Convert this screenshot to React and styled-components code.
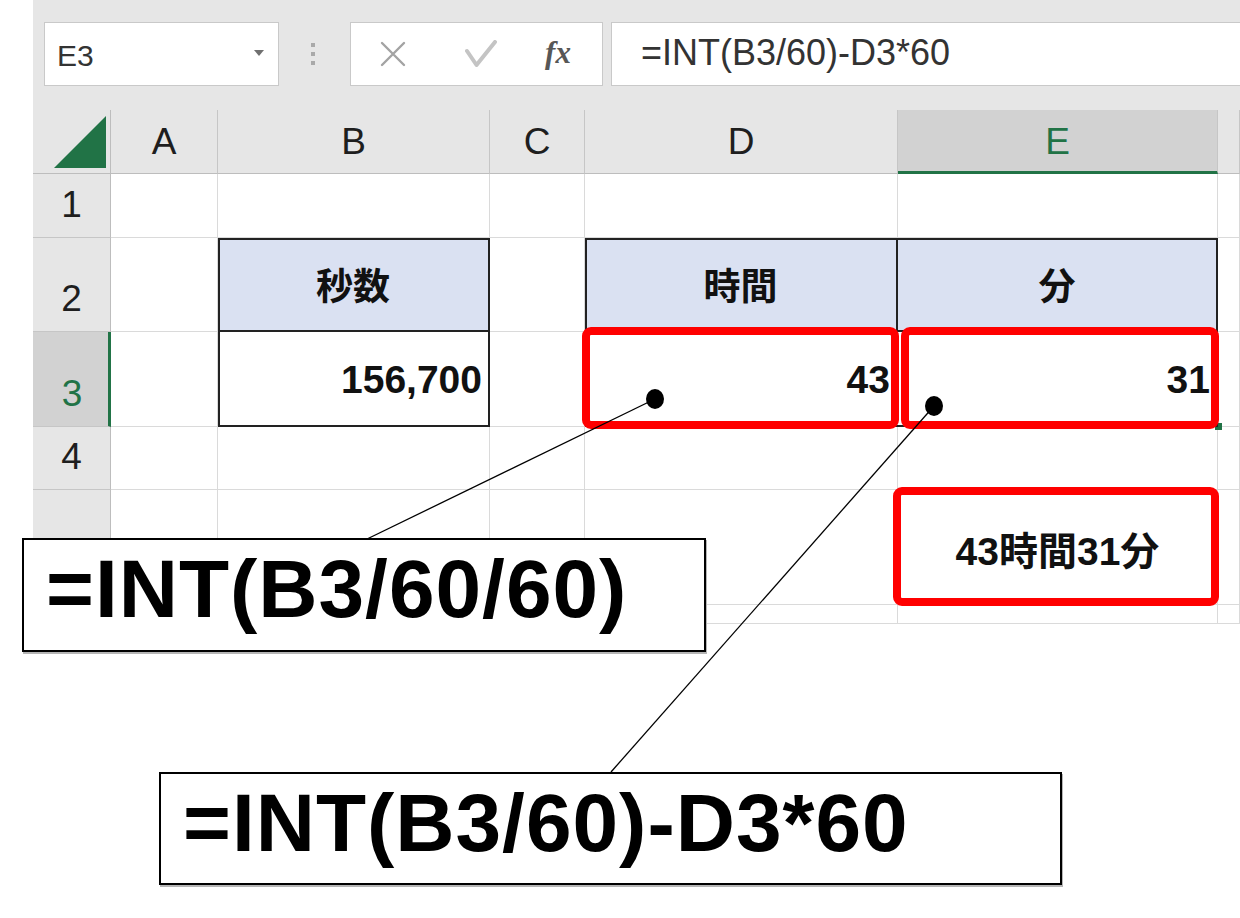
import React from 'react';
import styled, { createGlobalStyle } from 'styled-components';

const GREEN = '#217346';
const FONT = `"Liberation Sans", "Noto Sans CJK JP", sans-serif`;

const GlobalStyle = createGlobalStyle`
  html, body { margin: 0; padding: 0; background: #ffffff; }
  body { font-family: ${FONT}; }
  * { box-sizing: border-box; }
`;

const Canvas = styled.div`
  position: relative;
  width: 1240px;
  height: 918px;
  overflow: hidden;
  background: #ffffff;
`;

const Sheet = styled.div`
  margin-left: 33px;
  width: 1207px;
  background: #e6e6e6;
`;

const Toolbar = styled.div`
  display: flex;
  height: 110px;
  padding: 22px 0 24px 11px;
`;

const NameBox = styled.div`
  width: 235px;
  display: flex;
  align-items: center;
  padding: 4px 14px 0 12px;
  background: #ffffff;
  border: 1px solid #c9c9c9;
  font-family: "Liberation Sans", sans-serif;
  font-size: 30px;
  color: #333333;
`;

const DropArrow = styled.span`
  margin-left: auto;
  margin-bottom: 6px;
  width: 0;
  height: 0;
  border-left: 5.5px solid transparent;
  border-right: 5.5px solid transparent;
  border-top: 6px solid #707070;
`;

const Grip = styled.div`
  align-self: center;
  display: flex;
  flex-direction: column;
  gap: 5px;
  margin: 0 35px 0 32px;
`;

const GripDot = styled.span`
  width: 4px;
  height: 4px;
  background: #a9a9a9;
`;

const ButtonGroup = styled.div`
  width: 253px;
  display: grid;
  grid-template-columns: repeat(3, 84px);
  align-items: center;
  justify-items: center;
  background: #ffffff;
  border: 1px solid #c9c9c9;
`;

const FxLabel = styled.span`
  font-family: "Liberation Serif", serif;
  font-style: italic;
  font-weight: 700;
  font-size: 31px;
  color: #575757;
  margin-left: -6px;
  margin-top: -2px;
`;

const FormulaField = styled.div`
  flex: 1;
  margin-left: 8px;
  display: flex;
  align-items: center;
  padding: 0 0 2px 29px;
  background: #ffffff;
  border: 1px solid #c9c9c9;
  border-right: none;
  font-family: "Liberation Sans", sans-serif;
  font-size: 36px;
  color: #333333;
  white-space: nowrap;
`;

const Grid = styled.div`
  display: grid;
  grid-template-columns: 78px 107px 272px 95px 313px 320px 1fr;
  grid-template-rows: 64px 64px 94px 95px 63px 115px 19px;
`;

const Corner = styled.div`
  grid-row: 1;
  grid-column: 1;
  display: flex;
  justify-content: flex-end;
  align-items: flex-end;
  padding: 0 4px 5px 0;
  border-right: 1px solid #bdbdbd;
  border-bottom: 1px solid #bdbdbd;
`;

const ColHead = styled.div`
  grid-row: 1;
  grid-column: ${(p) => p.$c};
  display: flex;
  align-items: center;
  justify-content: center;
  background: ${(p) => (p.$active ? '#d2d2d2' : '#e6e6e6')};
  border-right: 1px solid #c6c6c6;
  border-bottom: ${(p) => (p.$active ? `3px solid ${GREEN}` : '1px solid #bdbdbd')};
  color: ${(p) => (p.$active ? GREEN : '#1e1e1e')};
  font-size: 37px;
  padding-top: ${(p) => (p.$active ? '3px' : '1px')};
`;

const RowHead = styled.div`
  grid-row: ${(p) => p.$r};
  grid-column: 1;
  display: flex;
  align-items: flex-end;
  justify-content: center;
  padding-bottom: 14px;
  padding-left: ${(p) => (p.$active ? '3px' : '0')};
  line-height: 1;
  background: ${(p) => (p.$active ? '#d2d2d2' : '#e6e6e6')};
  border-bottom: 1px solid #c6c6c6;
  border-right: ${(p) => (p.$active ? `3px solid ${GREEN}` : '1px solid #bdbdbd')};
  color: ${(p) => (p.$active ? GREEN : '#1e1e1e')};
  font-size: 37px;
  overflow: hidden;
`;

const Cell = styled.div`
  grid-row: ${(p) => p.$r};
  grid-column: ${(p) => p.$c};
  position: relative;
  display: flex;
  align-items: center;
  justify-content: ${(p) => p.$align || 'flex-start'};
  padding: 0 ${(p) => (p.$align === 'flex-end' ? '7px' : '0')} 0 0;
  background: ${(p) => (p.$head ? '#dae1f2' : '#ffffff')};
  border-right: ${(p) => (p.$head ? '2px solid #222' : '1px solid #dadada')};
  border-bottom: ${(p) => (p.$head ? '2px solid #222' : '1px solid #dadada')};
  font-family: ${FONT};
  font-weight: 700;
  font-size: ${(p) => (p.$head ? '37px' : '39px')};
  color: #111111;
  white-space: nowrap;
  &::after {
    content: '';
    display: ${(p) => (p.$mark ? 'block' : 'none')};
    position: absolute;
    inset: ${(p) => p.$mark || '0'};
    border: 8px solid #ff0000;
    border-radius: 9px;
    z-index: 2;
  }
`;

const CellText = styled.span`
  padding-top: ${(p) => (p.$head ? '0' : '2px')};
`;

const FillHandle = styled.span`
  position: absolute;
  right: -5px;
  bottom: -4px;
  width: 7px;
  height: 7px;
  background: ${GREEN};
  z-index: 1;
`;

const Frame = styled.div`
  grid-row: ${(p) => p.$rows};
  grid-column: ${(p) => p.$cols};
  border: 2px solid #222222;
  pointer-events: none;
  z-index: 1;
`;

const Leaders = styled.svg`
  position: absolute;
  left: 0;
  top: 0;
  width: 1240px;
  height: 918px;
  pointer-events: none;
  z-index: 3;
`;

const Callout = styled.div`
  position: absolute;
  left: ${(p) => p.$x}px;
  top: ${(p) => p.$y}px;
  width: ${(p) => p.$w}px;
  height: ${(p) => p.$h}px;
  padding: 8px 0 0 22px;
  background: #ffffff;
  border: 2px solid #000000;
  box-shadow: 1px 2px 0 #b5b5b5;
  font-family: "Liberation Sans", sans-serif;
  font-weight: 700;
  font-size: 82px;
  letter-spacing: 1px;
  line-height: 1;
  color: #000000;
  white-space: nowrap;
  z-index: 4;
`;

const letters = ['A', 'B', 'C', 'D', 'E', ''];
const rows = [1, 2, 3, 4, 5, 6];
const visibleRowLabels = [1, 2, 3, 4];

const content = {
  B2: { head: true, text: '秒数', align: 'center' },
  D2: { head: true, text: '時間', align: 'center' },
  E2: { head: true, text: '分', align: 'center' },
  B3: { text: '156,700', align: 'flex-end' },
  D3: { text: '43', align: 'flex-end', mark: '-5px -2px -3px -3px' },
  E3: { text: '31', align: 'flex-end', mark: '-5px -2px -3px 3px', handle: true },
  E5: { text: '43時間31分', align: 'center', mark: '-3px -2px -2px -5px' },
};

function CancelIcon() {
  return (
    <svg width="26" height="26" viewBox="0 0 26 26" fill="none">
      <path d="M2 2 L24 24 M24 2 L2 24" stroke="#a3a3a3" strokeWidth="2.4" strokeLinecap="round" />
    </svg>
  );
}

function EnterIcon() {
  return (
    <svg width="32" height="28" viewBox="0 0 32 28" fill="none" style={{ marginLeft: 8 }}>
      <path d="M2 11 L11.5 25 L30 2" stroke="#c4c4c4" strokeWidth="4" strokeLinejoin="round" strokeLinecap="round" />
    </svg>
  );
}

function SelectAll() {
  return (
    <svg width="52" height="52" viewBox="0 0 52 52">
      <path d="M52 0 L52 52 L0 52 Z" fill={GREEN} />
    </svg>
  );
}

export default function App() {
  return (
    <Canvas>
      <GlobalStyle />
      <Sheet>
        <Toolbar>
          <NameBox>
            E3
            <DropArrow />
          </NameBox>
          <Grip>
            <GripDot />
            <GripDot />
            <GripDot />
          </Grip>
          <ButtonGroup>
            <CancelIcon />
            <EnterIcon />
            <FxLabel>fx</FxLabel>
          </ButtonGroup>
          <FormulaField>=INT(B3/60)-D3*60</FormulaField>
        </Toolbar>
        <Grid>
          <Corner>
            <SelectAll />
          </Corner>
          {letters.map((l, i) => (
            <ColHead key={`h${i}`} $c={i + 2} $active={l === 'E'}>
              {l}
            </ColHead>
          ))}
          {rows.map((r) => (
            <React.Fragment key={`r${r}`}>
              <RowHead $r={r + 1} $active={r === 3}>
                {visibleRowLabels.includes(r) ? r : ''}
              </RowHead>
              {letters.map((l, i) => {
                const c = content[`${l}${r}`];
                return (
                  <Cell
                    key={`c${r}-${i}`}
                    $r={r + 1}
                    $c={i + 2}
                    $head={c && c.head}
                    $align={c && c.align}
                    $mark={c && c.mark}
                  >
                    {c && <CellText $head={c.head}>{c.text}</CellText>}
                    {c && c.handle && <FillHandle />}
                  </Cell>
                );
              })}
            </React.Fragment>
          ))}
          <Frame $rows="3 / 5" $cols="3 / 4" />
          <Frame $rows="3 / 5" $cols="5 / 7" />
        </Grid>
      </Sheet>

      <Leaders viewBox="0 0 1240 918">
        <line x1="655" y1="399" x2="365" y2="540" stroke="#000" strokeWidth="1.3" />
        <line x1="934" y1="406" x2="611" y2="772" stroke="#000" strokeWidth="1.3" />
        <ellipse cx="655" cy="399" rx="9" ry="10" fill="#000" />
        <ellipse cx="934" cy="406" rx="9" ry="10" fill="#000" />
      </Leaders>

      <Callout $x={22} $y={538} $w={684} $h={114}>=INT(B3/60/60)</Callout>
      <Callout $x={159} $y={772} $w={903} $h={113}>=INT(B3/60)-D3*60</Callout>
    </Canvas>
  );
}
